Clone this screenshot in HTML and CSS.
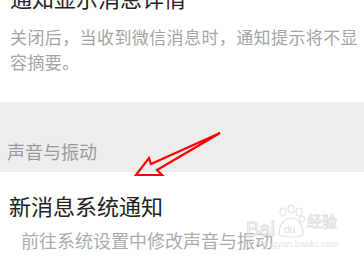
FILE: index.html
```html
<!DOCTYPE html>
<html lang="zh-CN">
<head>
<meta charset="utf-8">
<link rel="stylesheet" href="styles.css">
</head>
<body>
<div class="page">
  <section class="item">
    <div class="title top">通知显示消息详情</div>
    <div class="desc">关闭后，当收到微信消息时，通知提示将不显<br>容摘要。</div>
  </section>
  <div class="group">
    <div class="group-label">声音与振动</div>
  </div>
  <section class="item second">
    <div class="title">新消息系统通知</div>
    <div class="sub">前往系统设置中修改声音与振动</div>
  </section>

  <svg class="arrow" width="364" height="266" viewBox="0 0 364 266">
    <polygon points="136,175 149,158 151,164 220,133 157,170 162,175" fill="none" stroke="#ff0000" stroke-width="2.2" stroke-linejoin="miter"/>
  </svg>

  <div class="watermark">
    <div class="wm-row">
      <span class="wm-bai">Bai</span>
      <svg class="wm-paw" width="30" height="36" viewBox="0 0 30 36">
        <g fill="none" stroke="#e2e2e2" stroke-width="1.2">
          <ellipse cx="7" cy="8" rx="3" ry="4"/>
          <ellipse cx="15" cy="5" rx="3" ry="4"/>
          <ellipse cx="23" cy="8" rx="3" ry="4"/>
          <ellipse cx="26" cy="15" rx="2.5" ry="3"/>
          <path d="M3 30 C3 20 9 14 15 14 C21 14 27 20 27 30 C27 34 3 34 3 30 Z"/>
        </g>
        <text x="8" y="29" font-size="10" fill="#e0e0e0" font-family="Liberation Sans, sans-serif">du</text>
      </svg>
      <span class="wm-jy">经验</span>
    </div>
    <div class="wm-url">jingyan.baidu.com</div>
  </div>
</div>
</body>
</html>
```
FILE: styles.css
```css
html, body {
  margin: 0;
  padding: 0;
  background: #ffffff;
}
body {
  width: 364px;
  height: 266px;
  overflow: hidden;
  font-family: "Noto Sans CJK SC", "Noto Sans", sans-serif;
}
.page {
  position: relative;
  width: 364px;
  height: 266px;
  overflow: hidden;
}
.item {
  padding: 0 0 0 10px;
}
.title {
  font-size: 22px;
  line-height: 30px;
  color: #222222;
  white-space: nowrap;
}
.title.top {
  margin-top: -18px;
}
.desc {
  margin-top: 11.5px;
  font-size: 17px;
  letter-spacing: 0.4px;
  line-height: 25px;
  color: #a4a4a4;
  white-space: nowrap;
  padding-bottom: 28.5px;
}
.group {
  background: #ededed;
  height: 70px;
  box-sizing: border-box;
  padding: 37px 0 0 7px;
}
.group-label {
  font-size: 18px;
  line-height: 25px;
  color: #9a9a9a;
}
.item.second {
  padding-top: 17.5px;
  padding-left: 9px;
}
.sub {
  margin-top: 7px;
  padding-left: 12px;
  font-size: 18px;
  line-height: 26px;
  color: #ababab;
  white-space: nowrap;
}
.arrow {
  position: absolute;
  left: 0;
  top: 0;
}
.watermark {
  position: absolute;
  left: 246px;
  top: 204px;
  width: 100px;
}
.wm-row {
  display: flex;
  align-items: flex-end;
  height: 36px;
}
.wm-bai {
  font-family: "Liberation Sans", sans-serif;
  font-size: 20px;
  line-height: 22px;
  color: transparent;
  -webkit-text-stroke: 1px #e0e0e0;
  margin-right: 1px;
}
.wm-paw {
  display: block;
}
.wm-jy {
  font-size: 15px;
  line-height: 22px;
  color: transparent;
  -webkit-text-stroke: 0.8px #e0e0e0;
  margin-left: 1px;
  margin-bottom: 8px;
}
.wm-url {
  font-family: "Liberation Sans", sans-serif;
  font-size: 9.5px;
  line-height: 10px;
  color: #e4e4e4;
  padding-left: 16px;
  margin-top: -1px;
}
```
